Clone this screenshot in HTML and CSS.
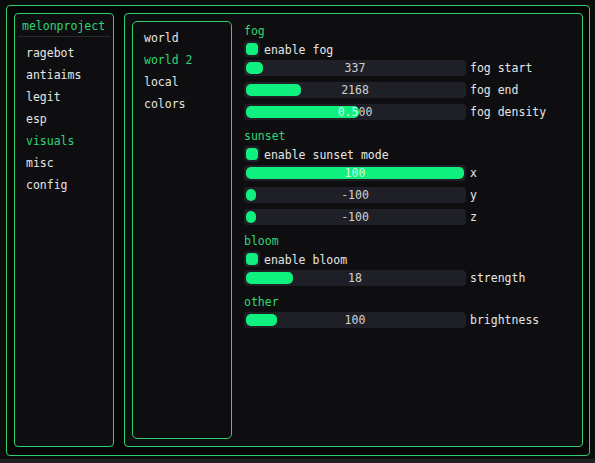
FILE: index.html
```html
<!DOCTYPE html>
<html>
<head>
<meta charset="utf-8">
<link rel="stylesheet" href="styles.css">
</head>
<body>
<div class="frame">
  <aside class="nav">
    <div class="brand">melonproject</div>
    <div class="sep"></div>
    <ul class="menu">
      <li>ragebot</li>
      <li>antiaims</li>
      <li>legit</li>
      <li>esp</li>
      <li class="on">visuals</li>
      <li>misc</li>
      <li>config</li>
    </ul>
  </aside>
  <main class="main">
    <div class="subnav">
      <ul class="menu sub">
        <li>world</li>
        <li class="on">world 2</li>
        <li>local</li>
        <li>colors</li>
      </ul>
    </div>
    <div class="content">
      <div class="title first">fog</div>
      <div class="check"><span class="box"><span class="tick"></span></span><span class="ctext">enable fog</span></div>
      <div class="slider"><div class="track"><div class="fill" style="width:17px"></div><span class="val">337</span></div><span class="lbl">fog start</span></div>
      <div class="slider"><div class="track"><div class="fill" style="width:55px"></div><span class="val">2168</span></div><span class="lbl">fog end</span></div>
      <div class="slider"><div class="track"><div class="fill" style="width:113px"></div><span class="val">0.500</span></div><span class="lbl">fog density</span></div>

      <div class="title">sunset</div>
      <div class="check"><span class="box"><span class="tick"></span></span><span class="ctext">enable sunset mode</span></div>
      <div class="slider"><div class="track"><div class="fill" style="width:218px"></div><span class="val">100</span></div><span class="lbl">x</span></div>
      <div class="slider"><div class="track"><div class="fill" style="width:10px"></div><span class="val">-100</span></div><span class="lbl">y</span></div>
      <div class="slider"><div class="track"><div class="fill" style="width:10px"></div><span class="val">-100</span></div><span class="lbl">z</span></div>

      <div class="title">bloom</div>
      <div class="check"><span class="box"><span class="tick"></span></span><span class="ctext">enable bloom</span></div>
      <div class="slider"><div class="track"><div class="fill" style="width:47px"></div><span class="val">18</span></div><span class="lbl">strength</span></div>

      <div class="title">other</div>
      <div class="slider"><div class="track"><div class="fill" style="width:31px"></div><span class="val">100</span></div><span class="lbl">brightness</span></div>
    </div>
  </main>
</div>
</body>
</html>
```
FILE: styles.css
```css
html {
  background: linear-gradient(to bottom, #0c0c0d 0, #0c0c0d 459px, #202020 459px);
  height: 100%;
}
body {
  margin: 0;
  font-family: "DejaVu Sans Mono", monospace;
  font-size: 11.5px;
  color: #e6e6e6;
}
.frame {
  margin: 5px 0 0 6px;
  width: 584px;
  height: 451px;
  box-sizing: border-box;
  border: 1px solid #2fcf72;
  border-radius: 4px;
  background: #050505;
  padding: 7px 6px 8px 7px;
  display: flex;
  gap: 10px;
}
.nav {
  width: 100px;
  box-sizing: border-box;
  border: 1px solid #2fcf72;
  border-radius: 4px;
  background: #0e0e10;
  display: flex;
  flex-direction: column;
}
.brand {
  height: 22px;
  line-height: 24px;
  padding-left: 7px;
  color: #2fd676;
}
.sep {
  height: 1px;
  background: #2a2a2e;
  margin: 0 3px;
}
.menu {
  list-style: none;
  margin: 0;
  padding: 5px 0 0 11px;
}
.menu li {
  height: 22px;
  line-height: 22px;
}
.menu li.on {
  color: #2fd676;
}
.main {
  flex: 1;
  box-sizing: border-box;
  border: 1px solid #2fcf72;
  border-radius: 4px;
  background: #0e0e10;
  padding: 7px;
  display: flex;
  gap: 12px;
}
.subnav {
  width: 100px;
  box-sizing: border-box;
  border: 1px solid #2fcf72;
  border-radius: 5px;
  background: #0e0e10;
}
.menu.sub {
  padding-top: 5px;
}
.content {
  padding-top: 2px;
  display: flex;
  flex-direction: column;
}
.title {
  height: 14px;
  line-height: 16px;
  color: #2fd676;
  margin: 2px 0 4px;
}
.title.first {
  margin-top: 0;
}
.check {
  height: 16px;
  display: flex;
  align-items: center;
  gap: 4px;
  margin-bottom: 3px;
}
.ctext {
  line-height: 16px;
  padding-top: 2px;
}
.box {
  width: 16px;
  height: 16px;
  box-sizing: border-box;
  padding: 2px;
  border-radius: 4px;
  background: #1f2027;
  display: flex;
}
.tick {
  flex: 1;
  border-radius: 4px;
  background: #0ff07e;
}
.slider {
  height: 16px;
  display: flex;
  align-items: center;
  gap: 4px;
  margin-bottom: 6px;
}
.slider:last-child {
  margin-bottom: 0;
}
.track {
  position: relative;
  width: 222px;
  height: 16px;
  border-radius: 4px;
  background: #1f2027;
  display: flex;
  align-items: center;
  justify-content: center;
}
.fill {
  position: absolute;
  left: 2px;
  top: 2px;
  height: 12px;
  border-radius: 5px;
  background: #0ff07e;
}
.val {
  position: relative;
  line-height: 16px;
  color: rgba(255, 255, 255, 0.8);
}
.lbl {
  color: #e6e6e6;
}
```
